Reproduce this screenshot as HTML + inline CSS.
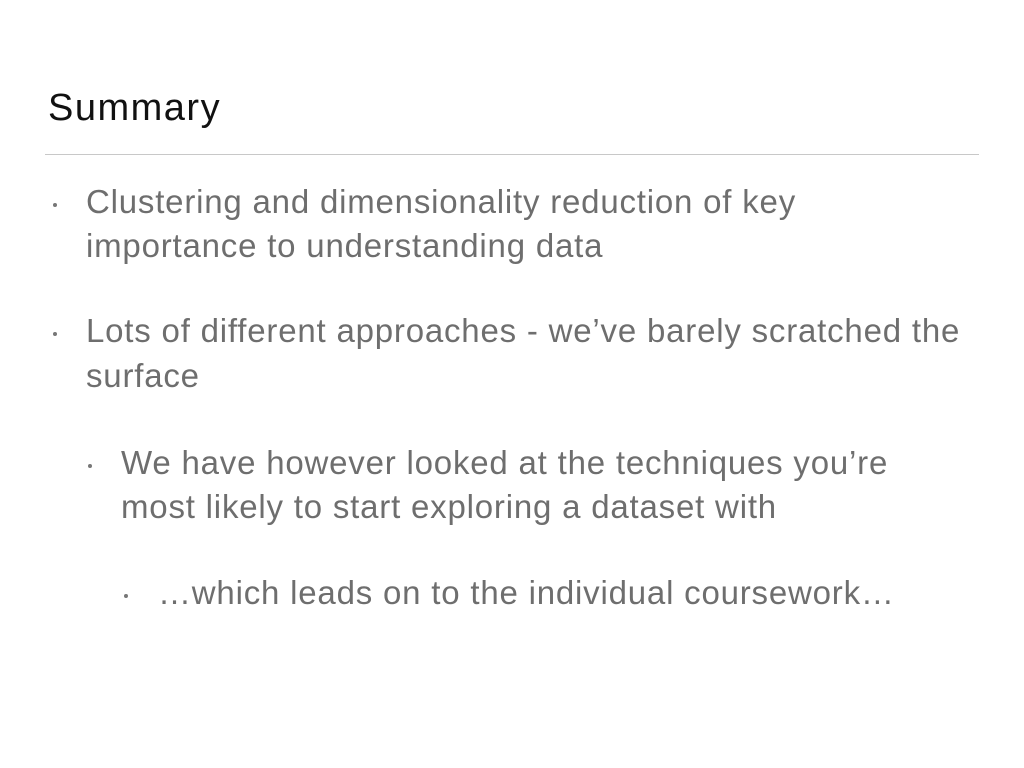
<!DOCTYPE html>
<html><head><style>
body{margin:0;width:1024px;height:768px;background:#fff;position:relative;overflow:hidden;font-family:"Liberation Sans",sans-serif}
.t{position:absolute;white-space:nowrap;color:#6e6e6e;font-size:33px;line-height:44px;letter-spacing:0.8px}
.d{position:absolute;width:4px;height:4px;border-radius:50%;background:#777}
</style></head><body>
<div style="position:absolute;left:48px;top:86px;font-size:38px;line-height:44px;color:#111;letter-spacing:1.5px">Summary</div>
<div style="position:absolute;left:45px;top:154px;width:934px;height:1px;background:#c8c8c8"></div>
<div class="d" style="left:53px;top:203px"></div>
<div class="t" style="left:86px;top:180px">Clustering and dimensionality reduction of key</div>
<div class="t" style="left:86px;top:224px">importance to understanding data</div>
<div class="d" style="left:53px;top:332px"></div>
<div class="t" style="left:86px;top:309px">Lots of different approaches - we’ve barely scratched the</div>
<div class="t" style="left:86px;top:354px">surface</div>
<div class="d" style="left:88px;top:464px"></div>
<div class="t" style="left:121px;top:441px">We have however looked at the techniques you’re</div>
<div class="t" style="left:121px;top:485px">most likely to start exploring a dataset with</div>
<div class="d" style="left:124px;top:594px"></div>
<div class="t" style="left:158px;top:571px">…which leads on to the individual coursework…</div>
</body></html>
